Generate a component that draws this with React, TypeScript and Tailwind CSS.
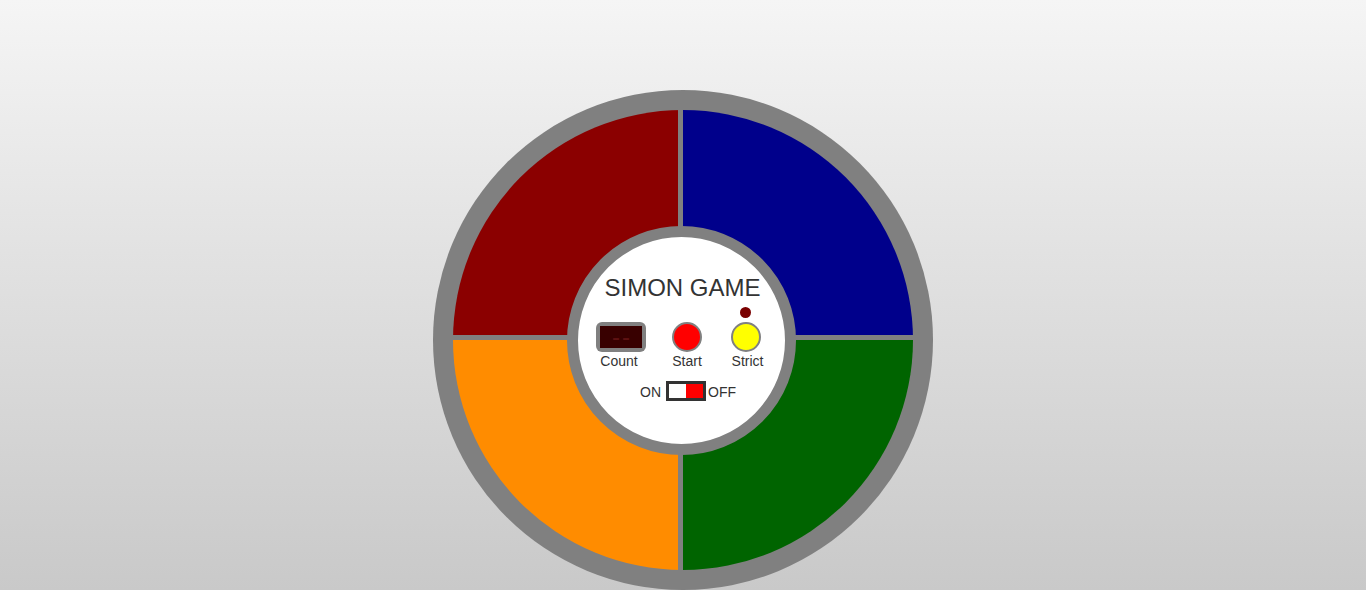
import React from "react";

export default function App() {
  return (
    <div
      className="w-full h-[590px] overflow-hidden flex justify-center pt-[90px] bg-gradient-to-b from-[#f5f5f5] to-[#c9c9c9]"
      style={{ fontFamily: '"Liberation Sans", Arial, sans-serif' }}
    >
      <div className="relative w-[500px] h-[500px] shrink-0 rounded-full bg-[#808080] p-[20px]">
        <div className="w-[460px] h-[460px] rounded-full overflow-hidden grid grid-cols-[225px_230px] grid-rows-[225px_230px] gap-[5px]">
          <div className="bg-[#8b0000]" />
          <div className="bg-[#00008b]" />
          <div className="bg-[#ff8c00]" />
          <div className="bg-[#006400]" />
        </div>

        <div className="absolute left-[134px] top-[136px] w-[229px] h-[229px] rounded-full border-[11px] border-[#808080] bg-white flex flex-col text-[#333333]">
          <div className="pt-[37px] pl-[2px] text-center text-[24px] leading-[28px]">SIMON GAME</div>

          <div className="mt-[5px] flex items-end pl-[18px]">
            <div className="w-[50px] flex flex-col items-center">
              <div className="w-[50px] h-[30px] rounded-[6px] bg-[#808080] p-[4px]">
                <div className="w-full h-full bg-[#380000] flex items-center justify-center text-[24px] leading-none text-[#5e1212] tracking-[2px] pl-[2px]">
                  --
                </div>
              </div>
              <div className="mt-[1px] -ml-[4px] text-[14px] leading-[16px] whitespace-nowrap">Count</div>
            </div>

            <div className="ml-[25px] w-[32px] flex flex-col items-center">
              <div className="w-[30px] h-[30px] mt-[1px] rounded-full bg-[#ff0000] border-[2.5px] border-[#808080]" />
              <div className="mt-[1px] text-[14px] leading-[16px] whitespace-nowrap">Start</div>
            </div>

            <div className="ml-[28px] w-[32px] flex flex-col items-center">
              <div className="w-[11px] h-[11px] rounded-full bg-[#7a0000] mb-[4px] -ml-[3px]" />
              <div className="w-[30px] h-[30px] rounded-full bg-[#ffff00] border-[2.5px] border-[#808080] -ml-[3px]" />
              <div className="mt-[1px] ml-[1px] text-[14px] leading-[16px] whitespace-nowrap">Strict</div>
            </div>
          </div>

          <div className="mt-[12px] flex items-center pl-[62px] text-[14px] leading-[16px]">
            <span className="mt-[1px]">ON</span>
            <div className="ml-[5px] w-[40px] h-[20px] border-[3px] border-[#333333] flex">
              <div className="w-1/2 h-full bg-white" />
              <div className="w-1/2 h-full bg-[#ff0000]" />
            </div>
            <span className="ml-[2px] mt-[1px]">OFF</span>
          </div>
        </div>
      </div>
    </div>
  );
}
